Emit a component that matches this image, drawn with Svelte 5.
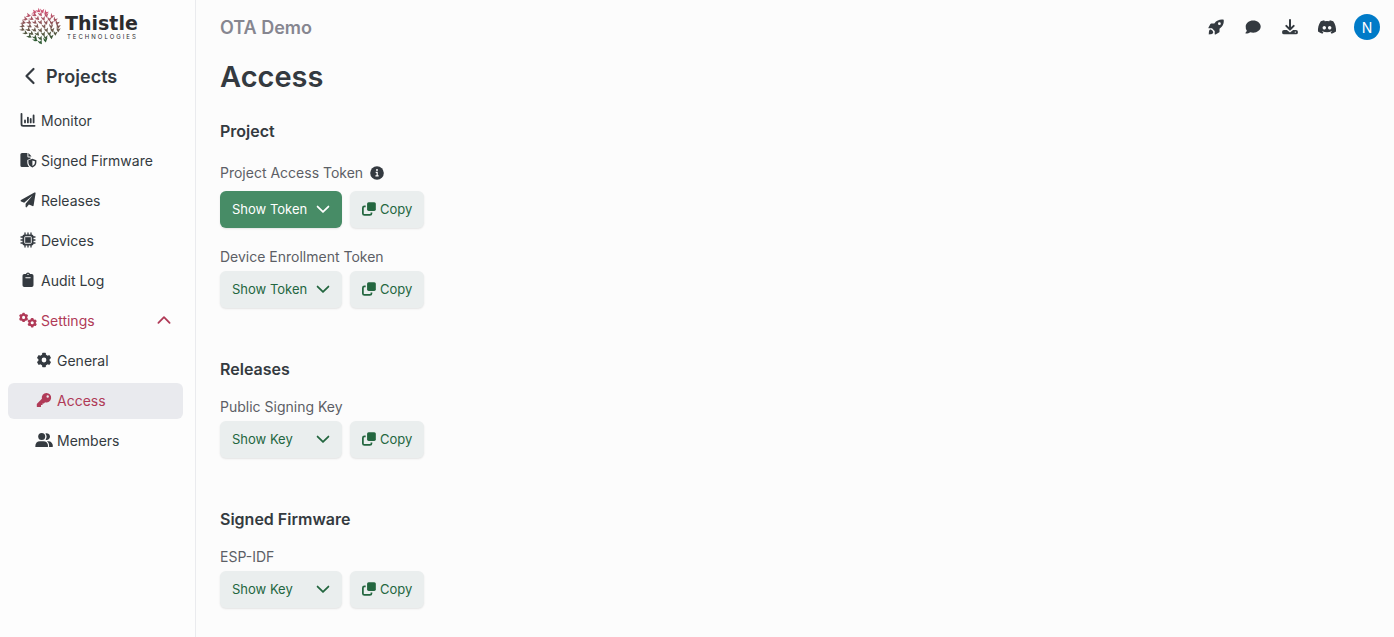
<script lang="ts">
    type NavItem = { label: string; icon: string; sub?: boolean; active?: boolean };
    type Secret = { label: string; action: string; info?: boolean; primary?: boolean };

    const navItems: NavItem[] = [
        { label: "Monitor", icon: "monitor" },
        { label: "Signed Firmware", icon: "firmware" },
        { label: "Releases", icon: "plane" },
        { label: "Devices", icon: "chip" },
        { label: "Audit Log", icon: "clipboard" },
        { label: "Settings", icon: "gears" },
        { label: "General", icon: "gear", sub: true },
        { label: "Access", icon: "key", sub: true, active: true },
        { label: "Members", icon: "members", sub: true },
    ];

    const sections: { title: string; secrets: Secret[] }[] = [
        {
            title: "Project",
            secrets: [
                { label: "Project Access Token", action: "Show Token", info: true, primary: true },
                { label: "Device Enrollment Token", action: "Show Token" },
            ],
        },
        { title: "Releases", secrets: [{ label: "Public Signing Key", action: "Show Key" }] },
        { title: "Signed Firmware", secrets: [{ label: "ESP-IDF", action: "Show Key" }] },
    ];

    const tools = [
        { label: "Getting started", icon: "rocket" },
        { label: "Feedback", icon: "chat" },
        { label: "Downloads", icon: "download" },
        { label: "Discord", icon: "discord" },
    ];

    // rows of the thistle head: vertical position, half width, number of florets
    const rows = [
        [2, 6, 4], [6, 12, 5], [10, 15, 6], [14, 17, 7], [18, 18, 6],
        [22, 18, 7], [26, 15, 6], [30, 11, 5], [34, 5, 3],
    ];
    const florets = rows.flatMap(([y, half, count]) =>
        Array.from({ length: count }, (_, i) => {
            const t = (i / (count - 1)) * 2 - 1;
            const k = y / 36;
            return {
                x: 20 + t * half,
                y: y + Math.abs(t) * (0.5 - k) * 5,
                angle: t * 55 * (1 - k * 0.6),
                color: `rgb(${Math.round(215 - 180 * k)}, ${Math.round(85 + 5 * k)}, ${Math.round(120 - 75 * k)})`,
            };
        })
    );
</script>

{#snippet gearShape(cx: number, cy: number, r: number)}
    <g transform="translate({cx} {cy})">
        <circle r={r * 0.56} fill="none" stroke="currentColor" stroke-width={r * 0.46} />
        {#each [0, 60, 120, 180, 240, 300] as angle}
            <rect x={-r * 0.26} y={-r} width={r * 0.52} height={r * 0.42} rx={r * 0.1} transform="rotate({angle})" />
        {/each}
    </g>
{/snippet}

{#snippet icon(name: string)}
    <svg class="icon" viewBox="0 0 16 16" fill="currentColor" aria-hidden="true">
        {#if name === "monitor"}
            <path d="M1.500 1.800v10.400a1.600 1.600 0 0 0 1.600 1.600H14.600" fill="none" stroke="currentColor" stroke-width="1.800" stroke-linecap="round" />
            <path d="M5 8.400v2M7.900 5.600v4.800M10.700 7v3.400M13.600 3.400v7" fill="none" stroke="currentColor" stroke-width="1.800" stroke-linecap="round" />
        {:else if name === "firmware"}
            <path d="M2 1h5.400v3.400a1 1 0 0 0 1 1h2.100v1.300L7.300 8v2.600c0 1.800.8 3.200 1.900 4.400H2a1.600 1.600 0 0 1-1.600-1.600V2.600A1.600 1.600 0 0 1 2 1z" />
            <path d="M8.400 1l3.200 3.400H8.400z" />
            <path fill-rule="evenodd" d="M12.400 6.700l4 1.500v2c0 2.400-1.500 4.200-4 5.300-2.500-1.100-4-2.900-4-5.300v-2zm0 1.700v5.500c1.600-.8 2.500-2 2.500-3.700V9.300z" />
        {:else if name === "plane"}
            <path d="M15.600 1.300l-2 12.200a.8.8 0 0 1-1.100.6l-3.600-1.500-2 2.400a.7.7 0 0 1-1.300-.5v-2.700l6.900-8.300-8.300 7.200-3.100-1.300a.8.8 0 0 1-.1-1.400L14.400.6a.8.8 0 0 1 1.200.7z" />
        {:else if name === "chip"}
            <path d="M5 1v14M8 1v14M11 1v14M1 5h14M1 8h14M1 11h14" stroke="currentColor" stroke-width="1.300" stroke-linecap="round" />
            <rect x="2.500" y="2.500" width="11" height="11" rx="1.800" />
            <rect x="4.700" y="4.700" width="6.600" height="6.600" rx="0.500" fill="none" stroke="#fdfdfd" stroke-width="0.900" />
        {:else if name === "clipboard"}
            <path fill-rule="evenodd" d="M5.900 2a2.200 2.200 0 0 1 4.200 0h1.600A1.800 1.800 0 0 1 13.500 3.800v9.400a1.800 1.800 0 0 1-1.800 1.800H4.300a1.800 1.800 0 0 1-1.800-1.800V3.800A1.800 1.800 0 0 1 4.300 2zM8 1.700a.7.7 0 1 0 0 1.400.7.7 0 0 0 0-1.400zM5.700 5.300a.4.4 0 0 0 0 .9h4.600a.4.4 0 0 0 0-.9z" />
        {:else if name === "gears"}
            {@render gearShape(3.600, 5.400, 4.700)}
            {@render gearShape(12.200, 10.800, 4.700)}
        {:else if name === "gear"}
            {@render gearShape(8, 8, 7.200)}
        {:else if name === "key"}
            <path fill-rule="evenodd" d="M10.400 1a4.700 4.700 0 1 1-1.300 9.200L7.900 11.400H6.500v1.500H5v1.500a.7.7 0 0 1-.7.700H1.500a.7.7 0 0 1-.7-.7v-2.200c0-.2.100-.4.200-.5l4.900-4.900A4.700 4.700 0 0 1 10.400 1zm1.300 2.300a1.200 1.200 0 1 0 0 2.400 1.200 1.200 0 0 0 0-2.400z" />
        {:else if name === "members"}
            <circle cx="5.700" cy="4.600" r="3.500" />
            <path d="M-.7 14.400c0-3.300 1.900-5.200 4.700-5.200h3.400c2.800 0 4.700 1.900 4.700 5.200 0 .3-.2.500-.5.500H-.2a.5.5 0 0 1-.5-.5z" />
            <path d="M9.300 1.600a3.300 3.300 0 1 1 .3 6.100 5 5 0 0 0-.3-6.100zM10.900 9.200h1.600c2.500 0 4.400 2 4.400 5.100 0 .3-.3.600-.6.600h-3.200c.3-2.500-.5-4.500-2.200-5.700z" />
        {:else if name === "rocket"}
            <path fill-rule="evenodd" d="M15.700.7c.4 3.600-.6 6.400-4.200 9v3c0 .4-.2.700-.6.900l-3.300 1.900a.6.6 0 0 1-.9-.6V12L4 9.300H1a.6.6 0 0 1-.5-.9l1.900-3.300c.2-.4.500-.6.900-.6h3C8.900 1.100 12 .2 15.700.7zm-4.300 2.600a1.400 1.400 0 1 0 0 2.800 1.400 1.400 0 0 0 0-2.800z" />
            <path d="M1.700 10.800c1.200-1.100 4.500 1.800 3.300 3.400-.8.900-2.600 1.100-4.200 1.200 0-1.600.1-3.700.9-4.600z" />
        {:else if name === "chat"}
            <path d="M8.200 1.500c4.200 0 7.500 2.700 7.500 6.100s-3.300 6.100-7.500 6.100c-1 0-2-.2-2.900-.5-1.300.9-2.900 1.400-4.500 1.300-.4 0-.5-.4-.3-.7.700-.8 1.200-1.600 1.300-2.400A5.500 5.500 0 0 1 .7 7.600c0-3.400 3.300-6.100 7.500-6.100z" />
        {:else if name === "download"}
            <path d="M8 1v9M4.300 6.900L8 10.500l3.700-3.600" fill="none" stroke="currentColor" stroke-width="2" stroke-linecap="round" stroke-linejoin="round" />
            <path fill-rule="evenodd" d="M2 10.900h2.900L8 13.600l3.100-2.700H14a1.900 1.900 0 0 1 1.900 1.900v.6a1.900 1.900 0 0 1-1.900 1.900H2a1.900 1.900 0 0 1-1.900-1.900v-.6A1.900 1.900 0 0 1 2 10.900zm11.300 1.500a.7.7 0 1 0 0 1.400.7.7 0 0 0 0-1.400z" />
        {:else if name === "discord"}
            <path fill-rule="evenodd" d="M14.200 2.300A14 14 0 0 0 10.800 1.200l-.5 1a12.600 12.600 0 0 0-4.600 0l-.5-1c-1.200.2-2.300.6-3.400 1.100C-.4 5.600-1.300 9.200-1 12.600c1.300 1 2.800 1.800 4.400 2.200l1-1.600-1.400-.7.300-.2c2.900 1.300 6.500 1.300 9.400 0l.3.200-1.400.7 1 1.600c1.600-.4 3.100-1.200 4.400-2.200.3-3.900-.7-7.400-2.800-10.300zM5.300 10.600c-.9 0-1.700-.8-1.700-1.800S4.400 7 5.300 7 7 7.800 7 8.800s-.8 1.800-1.700 1.800zm5.400 0c-.9 0-1.700-.8-1.700-1.800S9.800 7 10.700 7s1.700.8 1.700 1.800-.8 1.800-1.700 1.800z" />
        {:else if name === "info"}
            <circle cx="8" cy="8" r="7.800" />
            <circle cx="8" cy="4.600" r="1.100" fill="#fff" />
            <path d="M6.500 7.300h1.700v4M6.200 11.400h3.700" fill="none" stroke="#fff" stroke-width="1.400" />
        {:else if name === "copy"}
            <rect x="5.800" y="0.200" width="10" height="10" rx="1.800" />
            <path d="M4.200 5H2.800A1.800 1.800 0 0 0 1 6.800V13a1.800 1.800 0 0 0 1.800 1.800H9A1.800 1.800 0 0 0 10.800 13v-1" fill="none" stroke="currentColor" stroke-width="2" />
        {:else if name === "down"}
            <path d="M1.800 5.200L8 11.400l6.200-6.200" fill="none" stroke="currentColor" stroke-width="2" stroke-linecap="round" stroke-linejoin="round" />
        {:else if name === "up"}
            <path d="M2.400 10.800L8 5.200l5.600 5.600" fill="none" stroke="currentColor" stroke-width="1.800" stroke-linecap="round" stroke-linejoin="round" />
        {:else if name === "back"}
            <path d="M11.500 1L4.500 8l7 7" fill="none" stroke="currentColor" stroke-width="2.200" stroke-linecap="round" stroke-linejoin="round" />
        {/if}
    </svg>
{/snippet}

<div class="layout">
    <aside class="sidebar">
        <a class="logo" href="#home">
            <svg class="thistle" viewBox="0 0 40 38" aria-hidden="true">
                {#each florets as f}
                    <path d="M-2.600 -1.400L0 -.3 1.500 -2.600 1.900 2.200-.7 1.200z" fill={f.color} transform="translate({f.x} {f.y}) rotate({f.angle})" />
                {/each}
            </svg>
            <span class="wordmark">
                <span class="name">Thistle</span>
                <span class="tagline">TECHNOLOGIES</span>
            </span>
        </a>

        <a class="back" href="#projects">
            {@render icon("back")}
            Projects
        </a>

        <nav>
            {#each navItems as item}
                {#if item.icon === "gears"}
                    <button class="nav-item expanded" type="button" aria-expanded="true">
                        {@render icon(item.icon)}
                        <span>{item.label}</span>
                        {@render icon("up")}
                    </button>
                {:else}
                    <a class="nav-item" class:sub={item.sub} class:active={item.active} href="#{item.icon}">
                        {@render icon(item.icon)}
                        <span>{item.label}</span>
                    </a>
                {/if}
            {/each}
        </nav>
    </aside>

    <div class="content">
        <header>
            <span class="project">OTA Demo</span>
            <div class="tools">
                {#each tools as tool}
                    <button class="tool" type="button" aria-label={tool.label}>
                        {@render icon(tool.icon)}
                    </button>
                {/each}
                <button class="avatar" type="button">N</button>
            </div>
        </header>

        <main>
            <h1>Access</h1>
            {#each sections as section}
                <section>
                    <h2>{section.title}</h2>
                    {#each section.secrets as secret}
                        <div class="secret">
                            <div class="label" class:with-info={secret.info}>
                                {secret.label}
                                {#if secret.info}
                                    {@render icon("info")}
                                {/if}
                            </div>
                            <div class="actions">
                                <button class="btn show" class:primary={secret.primary} type="button">
                                    {secret.action}
                                    {@render icon("down")}
                                </button>
                                <button class="btn" type="button">
                                    {@render icon("copy")}
                                    Copy
                                </button>
                            </div>
                        </div>
                    {/each}
                </section>
            {/each}
        </main>
    </div>
</div>

<style>
    :global(body) {
        margin: 0;
        background: #fcfcfc;
    }
    .layout {
        display: flex;
        min-height: 100vh;
        font-family: Inter, sans-serif;
        font-size: 14px;
        color: #343a40;
    }
    a {
        color: inherit;
        text-decoration: none;
    }
    button {
        border: 0;
        background: none;
        font: inherit;
        color: inherit;
        cursor: pointer;
    }
    .icon {
        width: 16px;
        height: 16px;
        flex: none;
        overflow: visible;
    }
    .sidebar {
        box-sizing: border-box;
        width: 196px;
        flex: none;
        padding: 8px 12px 8px 8px;
        border-right: 1px solid #eaebee;
        background: #fdfdfd;
    }
    .logo {
        display: flex;
        align-items: center;
        gap: 5px;
        height: 38px;
        padding-left: 12px;
    }
    .thistle {
        width: 40px;
        height: 38px;
        overflow: visible;
    }
    .wordmark {
        display: flex;
        flex-direction: column;
        color: #2b2b2e;
    }
    .name {
        font: bold 19px/20px "DejaVu Sans", sans-serif;
    }
    .tagline {
        padding-left: 2px;
        font-size: 6px;
        line-height: 8px;
        letter-spacing: 2px;
    }
    .back {
        display: flex;
        align-items: center;
        gap: 8px;
        height: 34px;
        margin: 13px 0 10px;
        padding-left: 14px;
        font-size: 18px;
        font-weight: 600;
    }
    nav {
        display: flex;
        flex-direction: column;
        gap: 4px;
    }
    .nav-item {
        display: flex;
        align-items: center;
        gap: 5px;
        box-sizing: border-box;
        height: 36px;
        padding: 0 11px 2px 12px;
        border-radius: 6px;
        text-align: left;
    }
    .nav-item span {
        flex: 1;
    }
    .sub {
        padding-left: 28px;
    }
    .active {
        background: #e9eaee;
    }
    .active,
    .expanded {
        color: #b03a57;
    }
    .content {
        flex: 1;
        min-width: 0;
        padding: 0 14px 0 24px;
    }
    header {
        display: flex;
        align-items: center;
        justify-content: space-between;
        height: 54px;
    }
    .project {
        font-size: 18px;
        font-weight: 600;
        color: #868690;
    }
    .tools {
        display: flex;
        align-items: center;
        gap: 21px;
    }
    .tool {
        display: flex;
        padding: 0;
    }
    .avatar {
        width: 26px;
        height: 26px;
        margin-left: -2px;
        padding: 0;
        border-radius: 50%;
        background: #007bc8;
        color: #fff;
    }
    h1 {
        margin: 3px 0 24px;
        font-size: 29px;
        font-weight: 600;
        line-height: 40px;
    }
    h2 {
        margin: 0 0 18px;
        font-size: 16px;
        font-weight: 600;
        line-height: 20px;
    }
    section {
        margin-bottom: 51px;
    }
    .secret + .secret {
        margin-top: 19px;
    }
    .label {
        display: flex;
        align-items: center;
        gap: 7px;
        height: 19px;
        margin-bottom: 5px;
        color: #5c5f66;
    }
    .label .icon {
        width: 14px;
        height: 14px;
        color: #343a40;
    }
    .with-info {
        height: 27px;
    }
    .actions {
        display: flex;
        gap: 8px;
    }
    .btn {
        display: flex;
        align-items: center;
        gap: 4px;
        height: 37px;
        padding: 0 12px 1px;
        border-radius: 6px;
        background: #eaeeee;
        box-shadow: 0 1px 2px rgba(0, 0, 0, 0.1);
        font-size: 13px;
        color: #23663f;
    }
    .btn .icon {
        width: 14px;
        height: 14px;
    }
    .show {
        justify-content: space-between;
        width: 122px;
    }
    .primary {
        background: #478c66;
        color: #fff;
    }
</style>
